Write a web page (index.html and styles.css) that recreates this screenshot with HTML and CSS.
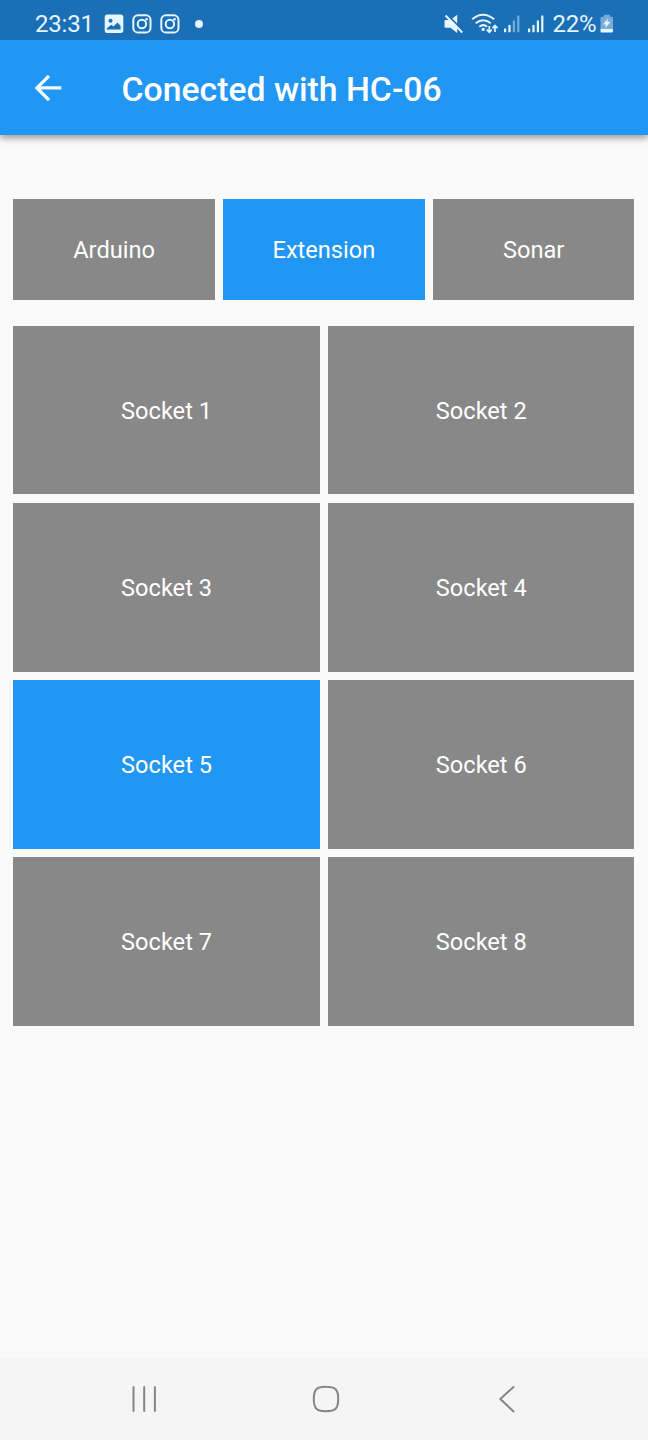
FILE: index.html
```html
<!DOCTYPE html>
<html lang="en">
<head>
<meta charset="utf-8">
<title>Conected with HC-06</title>
<link rel="stylesheet" href="styles.css">
</head>
<body>
<div class="screen">
  <header class="top">
    <div class="status">
      <div class="status-left">
        <span class="clock">23:31</span>
        <svg class="note" viewBox="0 0 20 20"><path fill-rule="evenodd" d="M3.500.5h13q2.800 0 2.800 2.800v13q0 2.800-2.800 2.800h-13q-2.800 0-2.800-2.800v-13q0-2.800 2.800-2.800zM6.500 4.800a2 2 0 1 0 .01 0zM2.800 15.500h13.800v-3.700l-3.200-3.300-3.900 3.900-2.200-1.700-4.500 3.600z"/></svg>
        <svg class="note" viewBox="0 0 20 20"><g class="line"><rect x="1.300" y="1.300" width="17.200" height="17.200" rx="4.600"/><circle cx="9.900" cy="10" r="4.200"/></g><circle cx="14.600" cy="5.200" r="1.300"/></svg>
        <svg class="note" viewBox="0 0 20 20"><g class="line"><rect x="1.300" y="1.300" width="17.200" height="17.200" rx="4.600"/><circle cx="9.900" cy="10" r="4.200"/></g><circle cx="14.600" cy="5.200" r="1.300"/></svg>
        <span class="dot"></span>
      </div>
      <div class="status-right">
        <svg width="22" height="22" viewBox="0 0 22 22"><path d="M2.800 7h4.700l6.700-5.300v18.300l-6.700-5.200H2.800q-1.300 0-1.300-1.300V8.300Q1.500 7 2.800 7z"/><path class="gap" d="M4 1.300l16.800 17"/><path class="line" d="M2.500 2.500l16.800 17"/></svg>
        <svg class="wifi" width="29" height="22" viewBox="0 0 29 22"><g class="line"><path d="M1.200 6.300q10.800-9.200 22 0M4.700 10.200q7.500-6 15 0M8.300 13.700q3.900-3.200 7.800 0"/><path class="thin" d="M18.300 13v6M15.800 16.700l2.500 2.600 2.500-2.600M24 19v-6M21.500 15.200l2.500-2.600 2.500 2.600"/></g><circle cx="12.200" cy="16.400" r="1.700"/></svg>
        <svg class="bars" width="18" height="20" viewBox="0 0 18 20"><path d="M1 14.500h2.200v3.800H1zM5.400 11h2.200v7.300H5.400z"/><path class="faint" d="M9.800 6.500H12v11.800H9.800zM14.200 1.500h2.200v16.800h-2.200z"/></svg>
        <svg class="bars second" width="18" height="20" viewBox="0 0 18 20"><path d="M1 14.500h2.200v3.800H1zM5.400 11h2.200v7.300H5.400zM9.800 6.500H12v11.800H9.800zM14.200 1.500h2.200v16.800h-2.200z"/></svg>
        <span class="percent">22%</span>
        <svg class="battery" width="14" height="20" viewBox="0 0 14 20"><path class="faint" d="M4 .8h6v2h1.500q1.500 0 1.500 1.500V14.800H.5V4.300q0-1.500 1.500-1.500h2z"/><path d="M.5 14.800H13v2.400q0 1.300-1.300 1.300H1.800Q.5 18.500.5 17.200zM7.800 4.500L3 10.500h3L5.500 14l5-6.200h-3z"/></svg>
      </div>
    </div>
    <div class="appbar">
      <svg class="back" width="28" height="28" viewBox="0 0 28 28"><path d="M27.300 12.300H6.900l9.300-9.300L13.800.700.600 14l13.200 13.300 2.400-2.400-9.300-9.300h20.400z"/></svg>
      <h1>Conected with HC-06</h1>
    </div>
  </header>
  <main>
    <div class="tabs">
      <button>Arduino</button>
      <button class="on">Extension</button>
      <button>Sonar</button>
    </div>
    <div class="sockets">
      <button>Socket 1</button>
      <button>Socket 2</button>
      <button>Socket 3</button>
      <button>Socket 4</button>
      <button class="on">Socket 5</button>
      <button>Socket 6</button>
      <button>Socket 7</button>
      <button>Socket 8</button>
    </div>
  </main>
  <nav>
    <svg width="28" height="28" viewBox="0 0 28 28"><path d="M3.500 2v24M14.200 2v24M24.900 2v24"/></svg>
    <svg width="28" height="28" viewBox="0 0 28 28"><path d="M14 1.700Q21 1.700 23.600 4.200T26.200 14T23.600 23.700T14 26.200T4.400 23.700T1.800 14T4.400 4.200T14 1.700z"/></svg>
    <svg width="28" height="28" viewBox="0 0 28 28"><path d="M20.500 2L7.300 14l13.200 12.500"/></svg>
  </nav>
</div>
</body>
</html>
```
FILE: styles.css
```css
* {
  box-sizing: border-box;
}

body {
  margin: 0;
  background: #fafafa;
  font-family: Roboto, sans-serif;
}

.screen {
  display: flex;
  flex-direction: column;
  width: 648px;
  height: 1440px;
}

svg {
  display: block;
  flex: none;
}

.top {
  height: 135px;
  background: #2196f3;
  color: #fff;
  box-shadow: 0 3px 7px rgba(0, 0, 0, .4);
}

.status {
  display: flex;
  justify-content: space-between;
  height: 40.4px;
  padding: 7px 34px 0 35px;
  background: #1a6fb7;
  color: #e6f6ff;
  font-size: 24px;
}

.status-left,
.status-right {
  display: flex;
  align-items: center;
  height: 34px;
}

.status svg {
  fill: #e6f6ff;
}

.status .line {
  fill: none;
  stroke: #e6f6ff;
  stroke-width: 2;
}

.status .gap {
  fill: none;
  stroke: #1a6fb7;
  stroke-width: 1.8;
}

.status .thin {
  stroke-width: 1.7;
}

.status .faint {
  opacity: .45;
}

.clock {
  width: 69px;
  letter-spacing: -.2px;
}

.note {
  width: 20px;
  height: 20px;
  margin-right: 8px;
}

.dot {
  width: 8px;
  height: 8px;
  margin-left: 7px;
  border-radius: 50%;
  background: #e6f6ff;
}

.wifi {
  margin-left: 6px;
}

.bars {
  margin-left: 3px;
}

.bars.second {
  margin-left: 6px;
}

.percent {
  width: 47.5px;
  margin-left: 7.5px;
  letter-spacing: -.2px;
}

.appbar {
  display: flex;
  align-items: center;
  height: 94.5px;
  padding-left: 33.5px;
}

.back {
  fill: #f0faff;
}

h1 {
  margin: 4px 0 0 60px;
  font-size: 33.75px;
  font-weight: 500;
}

main {
  flex: 1;
  padding: 64px 13.6px 0 13.4px;
}

.tabs {
  display: grid;
  grid-template-columns: repeat(3, 1fr);
  gap: 8.44px;
  height: 101.25px;
  margin-bottom: 25.4px;
}

.sockets {
  display: grid;
  grid-template-columns: 1fr 1fr;
  grid-auto-rows: 168.75px;
  gap: 8.44px;
}

button {
  padding: 1px 0 0;
  border: 0;
  background: #888;
  color: #fff;
  font: 400 23.6px/28px Roboto, sans-serif;
}

.on {
  background: #2196f3;
}

nav {
  display: flex;
  justify-content: space-between;
  align-items: center;
  height: 82px;
  padding: 0 126.7px 0 130.300px;
  background: #f5f5f5;
}

nav path {
  fill: none;
  stroke: #858585;
  stroke-width: 2;
  stroke-linecap: round;
  stroke-linejoin: round;
}
```
